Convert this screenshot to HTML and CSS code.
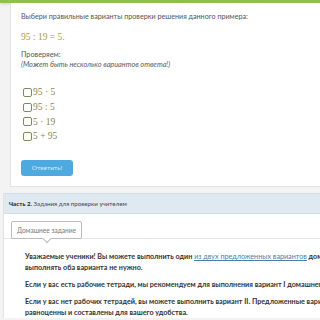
FILE: index.html
```html
<!DOCTYPE html>
<html lang="ru">
<head>
  <meta charset="UTF-8">
  <title>Задание</title>
  <link rel="stylesheet" href="styles.css">
</head>
<body>
  <div class="topbar"></div>
  <div class="page">
    <div class="task">
      <p class="question">Выбери правильные варианты проверки решения данного примера:</p>
      <p class="example">95 : 19 = 5.</p>
      <p class="hint">Проверяем:<br><i>(Может быть несколько вариантов ответа!)</i></p>
      <ul class="options">
        <li><span class="box"></span>95 · 5</li>
        <li><span class="box"></span>95 : 5</li>
        <li><span class="box"></span>5 · 19</li>
        <li><span class="box"></span>5 + 95</li>
      </ul>
      <button class="answer">Ответить!</button>
    </div>
  </div>
  <div class="part">
    <div class="part-head"><b>Часть 2.</b> Задания для проверки учителем</div>
    <div class="part-body">
      <div class="tabs"><span class="tab">Домашнее задание</span></div>
      <div class="text">
        <p>Уважаемые ученики! Вы можете выполнить один <a href="#">из двух предложенных вариантов</a> домашнего задания, выполнять оба варианта не нужно.</p>
        <p>Если у вас есть рабочие тетради, мы рекомендуем для выполнения вариант I домашнего задания.</p>
        <p>Если у вас нет рабочих тетрадей, вы можете выполнить вариант II. Предложенные варианты<br>равноценны и составлены для вашего удобства.</p>
      </div>
    </div>
  </div>
</body>
</html>
```

FILE: styles.css
```css
html, body {
  margin: 0;
  overflow: hidden;
}
body {
  width: 320px;
  background: #f3f3f3;
  font-family: 'Lato', sans-serif;
  color: #555;
}
.topbar {
  height: 3px;
  background: #8cc152;
  box-shadow: 0 1px 3px rgba(0,0,0,0.15);
}
.page {
  padding: 0 0 6px 10px;
}
.task {
  background: #fff;
  border: 1px solid #e2e2e2;
  border-top: none;
  border-right: none;
  padding: 9px 10px 10px;
  height: 164px;
}
.task p {
  margin: 0;
}
.question {
  font-size: 7.2px;
  line-height: 10px;
}
.example {
  margin-top: 10px !important;
  font-family: 'Liberation Serif', serif;
  font-size: 9.5px;
  color: #a3a046;
}
.hint {
  margin-top: 8px !important;
  font-size: 7.3px;
  line-height: 10px;
}
.hint i {
  color: #5a5a5a;
}
.options {
  list-style: none;
  margin: 15px 0 0;
  padding: 0;
}
.options li {
  display: flex;
  align-items: center;
  height: 14.7px;
  font-family: 'Liberation Serif', serif;
  font-size: 9.5px;
  color: #8a8650;
  padding-left: 2px;
}
.box {
  width: 7px;
  height: 7px;
  border: 1px solid #7d8a5e;
  border-radius: 2px;
  margin-right: 1px;
}
.answer {
  margin-top: 16px;
  width: 52px;
  height: 16px;
  border: none;
  border-radius: 3px;
  background: #4ea9e0;
  color: #d8eefa;
  font-family: 'Lato', sans-serif;
  font-size: 6.5px;
  padding: 0;
}
.part {
  margin-left: 3px;
  background: #fff;
  border-left: 1px solid #e2e2e2;
}
.part-head {
  background: #dfe9f1;
  border-top: 1px solid #d2dde6;
  border-bottom: 1px solid #d2dde6;
  height: 19px;
  line-height: 19px;
  padding-left: 5px;
  font-size: 6.2px;
  color: #445;
}
.part-head b {
  color: #222;
}
.tabs {
  padding: 3px 0 0 7px;
  height: 21px;
  border-bottom: 1px solid #e6e6e6;
}
.tab {
  position: relative;
  display: inline-block;
  border: 1px solid #bcbcbc;
  border-radius: 2px;
  height: 16px;
  line-height: 16px;
  padding: 0 5px;
  font-size: 6.6px;
  color: #777;
}
.tab::after {
  content: '';
  position: absolute;
  left: 50%;
  bottom: -4px;
  width: 5px;
  height: 5px;
  margin-left: -3px;
  background: #fff;
  border-right: 1px solid #bcbcbc;
  border-bottom: 1px solid #bcbcbc;
  transform: rotate(45deg);
}
.text {
  width: 372px;
  padding: 12px 0 0 21px;
  font-size: 7.2px;
  font-weight: bold;
  color: #333;
  line-height: 11px;
}
.text p {
  margin: 0 0 6px;
}
.text a {
  color: #4a7fa8;
  font-weight: normal;
  text-decoration: underline;
}
```
